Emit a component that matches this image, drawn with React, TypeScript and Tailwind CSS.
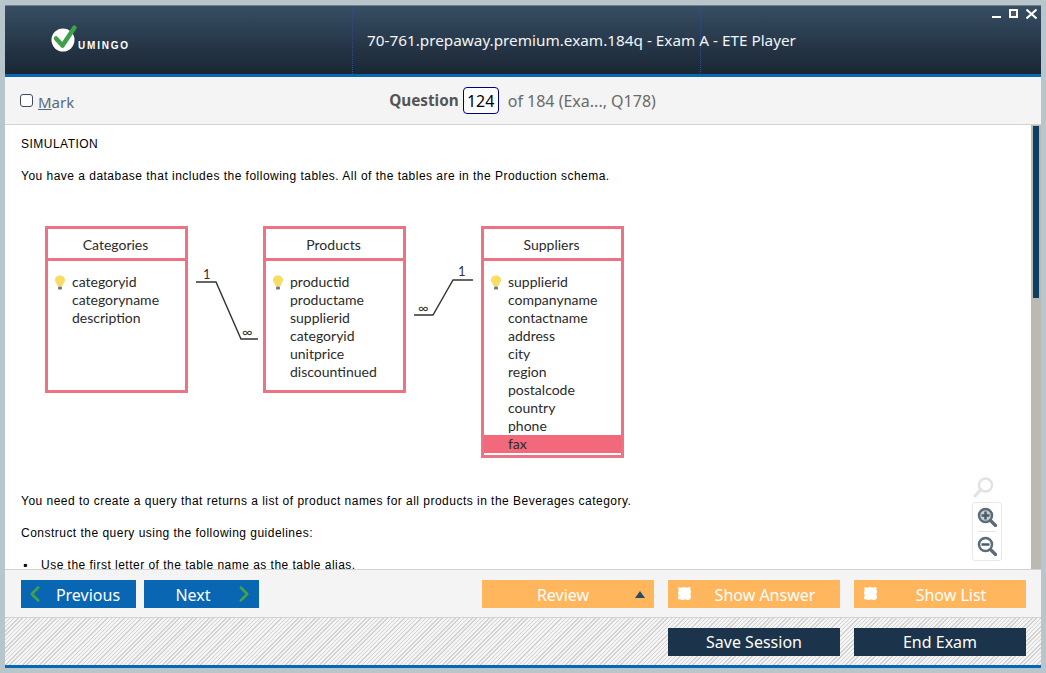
import { ChevronLeft, ChevronRight } from "lucide-react";

const uiFont = "font-['Noto_Sans',sans-serif]";

function Bulb() {
  return (
    <svg width="12" height="15" viewBox="0 0 12 15" className="absolute -left-[18px] top-[2px]">
      <path d="M6 .5C3 .5 1 2.600 1 5.100c0 2.200 1.900 3.400 2.500 6h5C9.100 8.500 11 7.300 11 5.100 11 2.600 9 .5 6 .5z" fill="#f9dc62" />
      <rect x="4" y="11.500" width="4" height="3" rx="1" fill="#77776a" />
    </svg>
  );
}

function DbTable({
  title,
  fields,
  keyField,
  highlight,
  height,
}: {
  title: string;
  fields: string[];
  keyField: string;
  highlight?: string;
  height: string;
}) {
  return (
    <div className={`w-[143px] ${height} border-[3px] border-[#ec7384] flex flex-col font-['Lato',sans-serif] text-[14px] text-[#2b2b2b] shrink-0 tracking-normal`}>
      <div className="h-[32px] pt-[2px] pr-[2px] flex items-center justify-center border-b-[3px] border-[#ec7384] shrink-0">
        {title}
      </div>
      <div className="pt-[12px] flex flex-col">
        {fields.map((f) => (
          <div
            key={f}
            className={`h-[18px] leading-[18px] pl-[24px] ${f === highlight ? "bg-[#f2697c]" : ""}`}
          >
            <span className="relative inline-block">
              {f === keyField && <Bulb />}
              {f}
            </span>
          </div>
        ))}
      </div>
    </div>
  );
}

function Connector({ flip }: { flip?: boolean }) {
  return (
    <svg width="75" height="125" viewBox="0 0 75 125" className="shrink-0">
      <path
        d={flip ? "M8 89H27L47 54H67" : "M8 56H28L53 113H70"}
        fill="none"
        stroke="#333"
        strokeWidth="1.400"
      />
      <text x={flip ? 52 : 15} y={flip ? 50 : 53} fontSize="13" fill="#333" fontFamily="Lato, sans-serif">
        1
      </text>
      <text x={flip ? 12 : 54} y={flip ? 87 : 111} fontSize="14" fill="#333" fontFamily="Lato, sans-serif">
        ∞
      </text>
    </svg>
  );
}

function Magnifier({ kind }: { kind: "plus" | "minus" }) {
  return (
    <svg width="20" height="20" viewBox="0 0 20 20">
      <circle cx="8.500" cy="8.500" r="6.500" fill={kind === "plus" ? "#c9d0d6" : "none"} stroke="#5b6b78" strokeWidth="2.500" />
      <path d="M13.500 13.500L18.500 18.500" stroke="#5b6b78" strokeWidth="3.200" strokeLinecap="round" />
      <path d="M4.500 8.500h8" stroke="#4b5b68" strokeWidth="2.500" />
      {kind === "plus" && <path d="M8.500 4.500v8" stroke="#4b5b68" strokeWidth="2.500" />}
    </svg>
  );
}

function OrangeButton({ label, check, arrow }: { label: string; check?: boolean; arrow?: boolean }) {
  return (
    <button className="w-[172px] h-[28px] pt-[2px] bg-[#ffb65c] text-white text-[16px] flex items-center justify-center relative">
      {check && (
        <span className="absolute left-[10px] top-[7px] w-[13px] h-[13px] bg-white rounded-[2px] border border-dashed border-[#ffd9a8]" />
      )}
      <span className={check ? "pl-[22px]" : "pr-[10px]"}>{label}</span>
      {arrow && (
        <span className="absolute right-[9px] top-[11px] w-0 h-0 border-x-[5px] border-x-transparent border-b-[7px] border-b-[#2c4a66]" />
      )}
    </button>
  );
}

export default function App() {
  return (
    <div className={`w-[1046px] h-[673px] bg-[#b8c6cc] pt-[5px] px-[5px] overflow-hidden flex flex-col ${uiFont}`}>
      {/* title bar */}
      <header className="h-[69px] shrink-0 border-t border-[#75818a] bg-gradient-to-b from-[#374e64] to-[#1a2634] flex relative">
        <div className="w-[348px] shrink-0 flex items-center pl-[45px] pt-[1px] border-r border-dotted border-[#2f4d8a]">
          <svg width="30" height="29" viewBox="0 0 30 29" className="shrink-0 -mt-[4px]">
            <circle cx="13" cy="16" r="11.500" fill="white" />
            <path d="M6 14.500l6.500 7L24.500 3.500" fill="none" stroke="#3ea14a" strokeWidth="4.500" strokeLinecap="round" strokeLinejoin="round" />
          </svg>
          <span className="font-['Liberation_Sans',sans-serif] font-bold text-white text-[10px] tracking-[1.800px] -ml-[2px] mt-[11px] leading-none">UMINGO</span>
        </div>
        <div className="w-[348px] shrink-0 flex items-center pl-[14px] border-r border-dotted border-[#2f4d8a] text-[#f2f5f7] text-[15.300px] whitespace-nowrap">
          70-761.prepaway.premium.exam.184q - Exam A - ETE Player
        </div>
        <div className="absolute right-[4px] top-[3px] flex items-start gap-[8px]">
          <span className="w-[9px] h-[2px] bg-white mt-[7px]" />
          <span className="w-[9px] h-[9px] border-2 border-white bg-[#4c5a68]" />
          <svg width="11" height="10" viewBox="0 0 11 10">
            <path d="M.5 .5l10 9M10.500 .5l-10 9" stroke="white" strokeWidth="2" />
          </svg>
        </div>
      </header>
      <div className="h-[3px] shrink-0 bg-[#0668b4]" />

      {/* question bar */}
      <div className="h-[47px] shrink-0 bg-[#f4f4f4] flex items-center">
        <div className="flex-1 flex items-center pl-[15px] text-[15px] text-[#56697c]">
          <span className="w-[13px] h-[13px] border border-[#3c4e63] rounded-[3px] bg-white mr-[5px]" />
          <span className="pt-[3px]">
            <span className="underline">M</span>ark
          </span>
        </div>
        <div className="flex items-center text-[16px] text-[#6a6a6a] whitespace-nowrap mr-[16px]">
          <span className="font-bold text-[#555555] text-[15.300px]">Question</span>
          <span className="ml-[4px] w-[36px] h-[27px] flex items-center justify-center rounded-[4px] border border-[#000080] bg-white text-black">
            124
          </span>
          <span className="ml-[9px]">of 184 (Exa..., Q178)</span>
        </div>
        <div className="flex-1" />
      </div>

      {/* question body */}
      <div className="h-[446px] shrink-0 bg-white border-y border-[#d2d2d2] flex overflow-hidden relative">
        <div className="flex-1 pl-[16px] pt-[11px] font-['Liberation_Sans',sans-serif] text-[12px] tracking-[0.480px] text-black leading-[16px]">
          <p>SIMULATION</p>
          <p className="mt-[16px]">You have a database that includes the following tables. All of the tables are in the Production schema.</p>
          <div className="flex items-start pl-[24px] mt-[42px]">
            <DbTable
              title="Categories"
              keyField="categoryid"
              fields={["categoryid", "categoryname", "description"]}
              height="h-[167px]"
            />
            <Connector />
            <DbTable
              title="Products"
              keyField="productid"
              fields={["productid", "productame", "supplierid", "categoryid", "unitprice", "discountinued"]}
              height="h-[167px]"
            />
            <Connector flip />
            <DbTable
              title="Suppliers"
              keyField="supplierid"
              highlight="fax"
              fields={["supplierid", "companyname", "contactname", "address", "city", "region", "postalcode", "country", "phone", "fax"]}
              height="h-[232px]"
            />
          </div>
          <p className="mt-[35px]">You need to create a query that returns a list of product names for all products in the Beverages category.</p>
          <p className="mt-[16px]">Construct the query using the following guidelines:</p>
          <ul className="mt-[16px] list-none">
            <li className="flex">
              <span className="w-[20px] pl-[2px]">▪</span>Use the first letter of the table name as the table alias.
            </li>
          </ul>
        </div>
        <div className="w-[10px] shrink-0 bg-[#bcb9b3] px-[2px] pt-[1px]">
          <div className="h-[172px] bg-[#0d3f66]" />
        </div>
        {/* zoom tools */}
        <div className="absolute right-[39px] top-[352px] flex flex-col items-center">
          <svg width="22" height="21" viewBox="0 0 22 21" className="-ml-[8px]">
            <circle cx="13.500" cy="8" r="6.500" fill="white" stroke="#e2e2e2" strokeWidth="2.500" />
            <path d="M8.500 13L3 19" stroke="#e2e2e2" strokeWidth="3.200" strokeLinecap="round" />
          </svg>
          <div className="mt-[4px] w-[30px] h-[59px] rounded-[3px] border border-[#e8e8e8] flex flex-col items-center justify-center bg-white">
            <Magnifier kind="plus" />
            <span className="w-[18px] h-px bg-[#e4e4e4] my-[4px]" />
            <Magnifier kind="minus" />
          </div>
        </div>
      </div>

      {/* navigation */}
      <div className="h-[47px] shrink-0 bg-[#f4f4f4] flex items-center pl-[16px] pr-[15px] text-[16px]">
        <button className="w-[115px] h-[28px] pt-[2px] bg-[#0866b2] text-white flex items-center relative justify-center pl-[19px]">
          <ChevronLeft size={26} strokeWidth={2.400} className="absolute left-[1px] top-[1px] text-[#44a04a]" />
          Previous
        </button>
        <button className="ml-[8px] w-[115px] h-[28px] pt-[2px] bg-[#0866b2] text-white flex items-center relative justify-center pr-[17px]">
          Next
          <ChevronRight size={26} strokeWidth={2.400} className="absolute right-[2px] top-[1px] text-[#44a04a]" />
        </button>
        <div className="ml-auto flex gap-[14px]">
          <OrangeButton label="Review" arrow />
          <OrangeButton label="Show Answer" check />
          <OrangeButton label="Show List" check />
        </div>
      </div>

      {/* session bar */}
      <div className="h-[48px] shrink-0 border-t border-[#d2d2d2] bg-[repeating-linear-gradient(135deg,#d2d2d2_0,#d2d2d2_1px,#f4f4f4_1px,#f4f4f4_3px)] flex items-center justify-end gap-[14px] pr-[15px] text-[16px] text-white">
        <button className="w-[172px] h-[28px] pt-[1px] bg-[#1b344b]">Save Session</button>
        <button className="w-[172px] h-[28px] pt-[1px] bg-[#1b344b]">End Exam</button>
      </div>
      <div className="h-[3px] shrink-0 bg-[#0668b4]" />
    </div>
  );
}
